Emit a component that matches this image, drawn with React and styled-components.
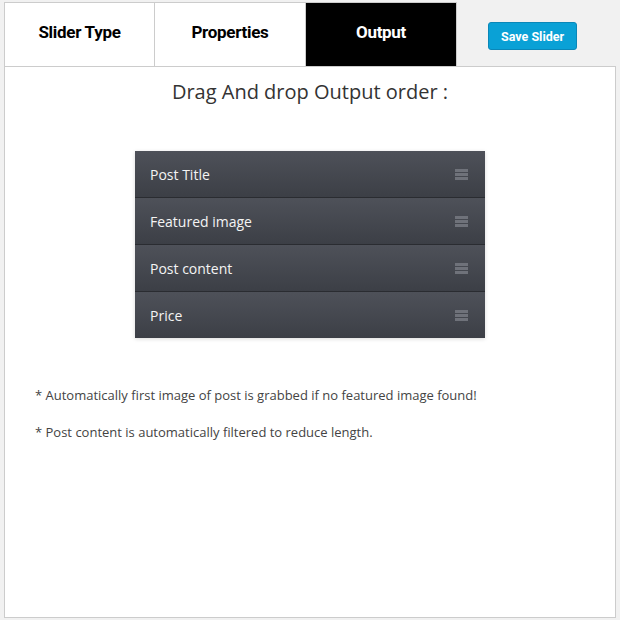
import React from "react"
import styled, { createGlobalStyle } from "styled-components"

const Global = createGlobalStyle`
  html, body {
    margin: 0;
    padding: 0;
    background: #f1f1f1;
  }
`;

const Page = styled.div`
  width: 620px;
  height: 620px;
  box-sizing: border-box;
  padding: 2px 4px 2px 4px;
  display: flex;
  flex-direction: column;
  font-family: "Open Sans", sans-serif;
`;

const TabBar = styled.div`
  display: flex;
  align-items: stretch;
  height: 64px;
`;

const Tab = styled.div`
  width: 151px;
  box-sizing: border-box;
  display: flex;
  align-items: center;
  justify-content: center;
  font-family: Roboto, sans-serif;
  font-weight: 700;
  font-size: 17px;
  letter-spacing: -0.3px;
  padding-bottom: 6px;
  border: 1px solid #cccccc;
  border-bottom: none;
  border-left-width: ${p => (p.first ? "1px" : "0")};
  background: ${p => (p.active ? "#000" : "#fff")};
  color: ${p => (p.active ? "#fff" : "#000")};
`;

const ButtonSlot = styled.div`
  flex: 1;
  display: flex;
  align-items: flex-start;
  padding: 20px 0 0 31px;
`;

const SaveButton = styled.button`
  cursor: pointer;
  background: #0aa1d6;
  border: 1px solid #0a87b8;
  border-radius: 3px;
  color: #fff;
  font-family: Roboto, sans-serif;
  font-weight: 700;
  font-size: 12.5px;
  height: 28px;
  padding: 0 12px;
`;

const Panel = styled.div`
  flex: 1;
  background: #fff;
  border: 1px solid #cccccc;
  display: flex;
  flex-direction: column;
  align-items: center;
`;

const Heading = styled.h2`
  margin: 11px 0 0;
  font-weight: 400;
  font-size: 20px;
  color: #333;
`;

const List = styled.ul`
  list-style: none;
  margin: 46px 0 0;
  padding: 0;
  width: 350px;
  box-shadow: 0 1px 4px rgba(0, 0, 0, 0.15);
`;

const Item = styled.li`
  height: 46px;
  display: flex;
  align-items: center;
  justify-content: space-between;
  padding: 0 17px 0 15px;
  background: linear-gradient(#4e5159, #3c3f46);
  border-top: 1px solid #2a2c31;
  color: #f4f4f4;
  font-size: 14px;
  &:first-child {
    border-top: none;
  }
`;

const Handle = styled.span`
  display: flex;
  flex-direction: column;
  gap: 1px;
  & > i {
    display: block;
    width: 13px;
    height: 3px;
    background: #6f727a;
  }
`;

const Notes = styled.div`
  align-self: stretch;
  padding: 48px 0 0 30px;
  font-size: 13px;
  color: #444;
  & p {
    margin: 0 0 19px;
  }
`;

const fields = ["Post Title", "Featured image", "Post content", "Price"];

export default function App() {
  return (
    <Page>
      <Global />
      <TabBar>
        <Tab first>Slider Type</Tab>
        <Tab>Properties</Tab>
        <Tab active>Output</Tab>
        <ButtonSlot>
          <SaveButton>Save Slider</SaveButton>
        </ButtonSlot>
      </TabBar>
      <Panel>
        <Heading>Drag And drop Output order :</Heading>
        <List>
          {fields.map(f => (
            <Item key={f}>
              {f}
              <Handle><i /><i /><i /></Handle>
            </Item>
          ))}
        </List>
        <Notes>
          <p>* Automatically first image of post is grabbed if no featured image found!</p>
          <p>* Post content is automatically filtered to reduce length.</p>
        </Notes>
      </Panel>
    </Page>
  )
}
